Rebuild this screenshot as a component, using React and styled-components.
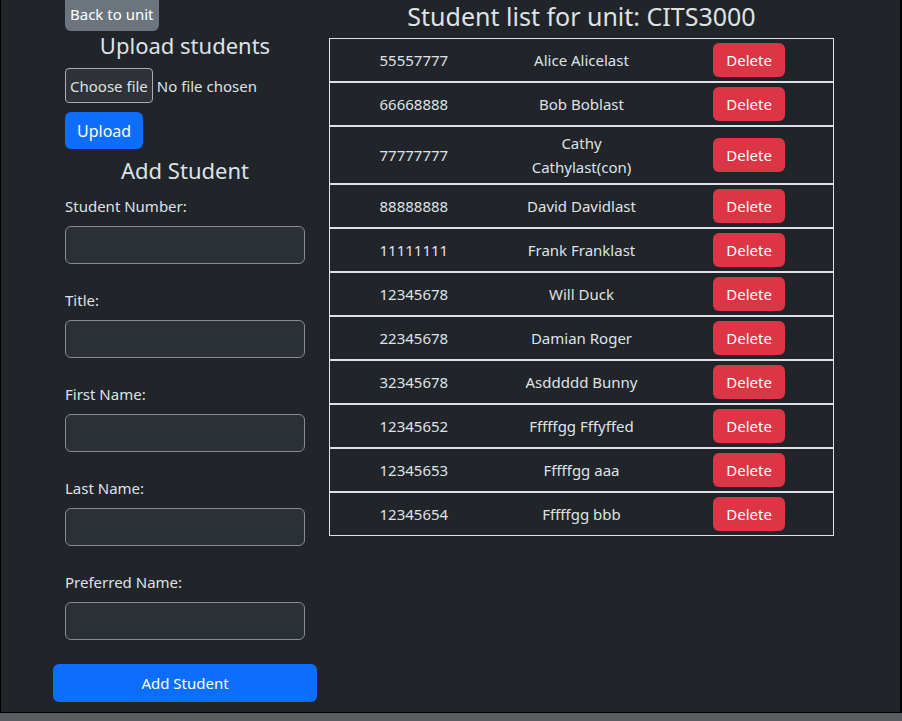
import React from "react";
import styled, { createGlobalStyle } from "styled-components";

const students = [
  { number: "55557777", name: "Alice Alicelast" },
  { number: "66668888", name: "Bob Boblast" },
  { number: "77777777", name: "Cathy Cathylast(con)", wrap: true },
  { number: "88888888", name: "David Davidlast" },
  { number: "11111111", name: "Frank Franklast" },
  { number: "12345678", name: "Will Duck" },
  { number: "22345678", name: "Damian Roger" },
  { number: "32345678", name: "Asddddd Bunny" },
  { number: "12345652", name: "Fffffgg Fffyffed" },
  { number: "12345653", name: "Fffffgg aaa" },
  { number: "12345654", name: "Fffffgg bbb" },
];

const fields = [
  "Student Number:",
  "Title:",
  "First Name:",
  "Last Name:",
  "Preferred Name:",
];

function App() {
  return (
    <>
      <GlobalStyle />
      <Frame>
        <Page>
          <LeftColumn>
            <BackButton>Back to unit</BackButton>
            <SectionTitle>Upload students</SectionTitle>
            <FileRow>
              <ChooseFile>Choose file</ChooseFile>
              <FileName>No file chosen</FileName>
            </FileRow>
            <UploadButton>Upload</UploadButton>
            <SectionTitle second>Add Student</SectionTitle>
            <Form>
              {fields.map((label) => (
                <Field key={label}>
                  <Label>{label}</Label>
                  <Input type="text" />
                </Field>
              ))}
              <SubmitButton>Add Student</SubmitButton>
            </Form>
          </LeftColumn>
          <RightColumn>
            <ListTitle>Student list for unit: CITS3000</ListTitle>
            <Table>
              {students.map((s, i) => (
                <Row key={s.number + i} first={i === 0}>
                  <Cell>{s.number}</Cell>
                  <Cell>
                    {s.wrap ? (
                      <>
                        Cathy
                        <br />
                        Cathylast(con)
                      </>
                    ) : (
                      s.name
                    )}
                  </Cell>
                  <Cell>
                    <DeleteButton>Delete</DeleteButton>
                  </Cell>
                </Row>
              ))}
            </Table>
          </RightColumn>
        </Page>
      </Frame>
    </>
  );
}

export default App;

const GlobalStyle = createGlobalStyle`
  * { box-sizing: border-box; }
  body {
    margin: 0;
    background-color: #5a5d61;
    font-family: "Noto Sans", "DejaVu Sans", sans-serif;
    color: #dee2e6;
  }
`;
const Frame = styled.div`
  width: 902px;
  height: 713px;
  background-color: #212529;
  border-left: 1px solid #000;
  border-right: 2px solid #000;
  border-bottom: 1px solid #000;
  overflow: hidden;
`;
const Page = styled.div`
  display: flex;
  gap: 12px;
  padding-left: 52px;
`;
const LeftColumn = styled.div`
  width: 264px;
  padding: 0 12px;
  display: flex;
  flex-direction: column;
  align-items: flex-start;
`;
const BackButton = styled.button`
  height: 31px;
  padding: 0 5px 3px;
  border: none;
  border-radius: 0 0 6px 6px;
  background-color: #6c757d;
  color: #fff;
  font-family: inherit;
  font-size: 15px;
  line-height: 24px;
`;
const SectionTitle = styled.h3`
  align-self: stretch;
  text-align: center;
  margin: ${({ second }) => (second ? "7px 0 9px" : "0 0 8px")};
  font-size: 22px;
  font-weight: 400;
  line-height: 29px;
`;
const FileRow = styled.div`
  display: flex;
  align-items: center;
  gap: 4px;
`;
const ChooseFile = styled.span`
  height: 35px;
  padding: 0 4px;
  display: flex;
  align-items: center;
  border: 1px solid #a8acb0;
  border-radius: 4px;
  background-color: #2f3337;
  font-size: 15px;
`;
const FileName = styled.span`
  font-size: 15px;
`;
const UploadButton = styled.button`
  margin-top: 9px;
  height: 37px;
  padding: 0 12px;
  border: none;
  border-radius: 6px;
  background-color: #0d6efd;
  color: #fff;
  font-family: inherit;
  font-size: 16px;
`;
const Form = styled.div`
  align-self: stretch;
  display: flex;
  flex-direction: column;
  gap: 24px;
`;
const Field = styled.div`
  display: flex;
  flex-direction: column;
  gap: 8px;
`;
const Label = styled.label`
  font-size: 15px;
  line-height: 24px;
`;
const Input = styled.input`
  width: 240px;
  height: 38px;
  border: 1px solid #868b90;
  border-radius: 6px;
  background-color: #2b3035;
  color: #dee2e6;
  outline: none;
`;
const SubmitButton = styled.button`
  margin: 0 -12px;
  height: 38px;
  border: none;
  border-radius: 6px;
  background-color: #0d6efd;
  color: #fff;
  font-family: inherit;
  font-size: 15px;
`;
const RightColumn = styled.div`
  width: 505px;
  display: flex;
  flex-direction: column;
`;
const ListTitle = styled.h2`
  margin: 0 0 6px;
  text-align: center;
  font-size: 25px;
  font-weight: 400;
  line-height: 32px;
`;
const Table = styled.div`
  border: 1px solid #dee2e6;
`;
const Row = styled.div`
  display: grid;
  grid-template-columns: 1fr 1fr 1fr;
  align-items: center;
  border-top: ${({ first }) => (first ? "none" : "2px solid #dee2e6")};
  padding: 4px 0;
`;
const Cell = styled.div`
  text-align: center;
  font-size: 15px;
  line-height: 24px;
`;
const DeleteButton = styled.button`
  height: 34px;
  padding: 0 13px;
  border: none;
  border-radius: 6px;
  background-color: #dc3545;
  color: #fff;
  font-family: inherit;
  font-size: 15px;
`;
